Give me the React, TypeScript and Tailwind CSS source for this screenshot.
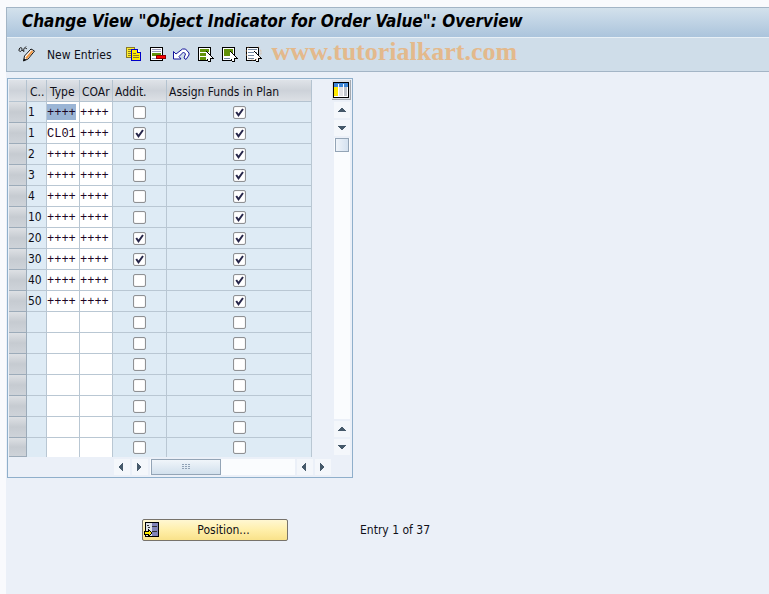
import React from "react";

const check = (
  <svg className="pointer-events-none absolute left-0 top-0 hidden h-[13px] w-[13px] peer-checked:block" viewBox="0 0 13 13" fill="none" stroke="#26264a" strokeWidth="2">
    <path d="M3.2 6 5.5 9.3 10 3" />
  </svg>
);

const rows = [
  { c: "1", type: "++++", area: "++++", addit: false, plan: true },
  { c: "1", type: "CL01", area: "++++", addit: true, plan: true },
  { c: "2", type: "++++", area: "++++", addit: false, plan: true },
  { c: "3", type: "++++", area: "++++", addit: false, plan: true },
  { c: "4", type: "++++", area: "++++", addit: false, plan: true },
  { c: "10", type: "++++", area: "++++", addit: false, plan: true },
  { c: "20", type: "++++", area: "++++", addit: true, plan: true },
  { c: "30", type: "++++", area: "++++", addit: true, plan: true },
  { c: "40", type: "++++", area: "++++", addit: false, plan: true },
  { c: "50", type: "++++", area: "++++", addit: false, plan: true },
  ...Array.from({ length: 7 }, () => ({ c: "", type: "", area: "", addit: false, plan: false })),
];

function Tick({ on, label }: { on: boolean; label: string }) {
  return (
    <label className="relative mx-auto block h-[13px] w-[13px]">
      <input
        type="checkbox"
        defaultChecked={on}
        aria-label={label}
        className="peer block h-[13px] w-[13px] appearance-none rounded-[2px] border border-[#8f9194] bg-white shadow-[inset_0_0_1px_#b0b0b0]"
      />
      {check}
    </label>
  );
}

function Arrow({ dir }: { dir: "up" | "down" | "left" | "right" }) {
  const shapes = {
    up: "M7 6h2v1h1v1h1v1h1v1H4V9h1V8h1V7h1z",
    down: "M4 6h8v1h-1v1h-1v1H9v1H7V9H6V8H5V7H4z",
    left: "M9 4v8H8v-1H7v-1H6V9H5V7h1V6h1V5h1V4z",
    right: "M5 4v8h1v-1h1v-1h1V9h1V7H8V6H7V5H6V4z",
  };
  return (
    <button aria-label={`Scroll ${dir}`} className="block h-4 w-4 shrink-0 bg-[#f4f7fb]">
      <svg viewBox="0 0 16 16" className="h-4 w-4" shapeRendering="crispEdges">
        <path d={shapes[dir]} fill="#46596a" />
      </svg>
    </button>
  );
}

// white mouse pointer shared by the selection icons
const pointer = (
  <>
    <path d="M9 5h1v1h1v1h1v1h1v1h1v1h1v1h1v1h1v1h-3v3h-3v-2h-1v1H9z" fill="#000" />
    <path d="M9 6h1v1h1v1h1v1h1v1h1v1h1v1h-2v3h-2v-2h-1v1H9z" fill="#fff" />
  </>
);

function ToolIcon({ name }: { name: string }) {
  return (
    <svg viewBox="0 0 17 16" className="h-4 w-[17px]" shapeRendering="crispEdges">
      {name === "Display/Change" && (
        <g shapeRendering="auto" fill="none">
          <path d="M1 4.500C1 1 4 1 4 3S2 6.500 1 4.500zM4 4l2 1.500M6 5.500C5 2 7 1 9 3M7 1.500l1-1" stroke="#111" />
          <path d="m5.500 15 1-5 6.500-7 3.500 2-6.500 8z" fill="#fff" stroke="#111" />
          <path d="m8 12.500 6.500-7.500" stroke="#f39a45" strokeWidth="2" />
          <path d="m5.500 15 3-1.500-2.500-1z" fill="#111" />
        </g>
      )}
      {name === "Copy As" && (
        <>
          <path d="M1.500 1.500h8v10h-8z" fill="#ffee2b" stroke="#8a7a28" />
          <path d="M3 3.500h3M3 5.500h3M3 7.500h3M3 9.500h3" stroke="#8a7a28" />
          <path d="M6.500 3.500h6l3 3v8h-9z" fill="#ffed00" stroke="#0000c8" />
          <path d="M12.500 3.500v3h3" fill="#fff" stroke="#0000c8" />
          <path d="M8 7.500h3M8 9.500h6M8 11.500h6" stroke="#8a7a28" />
        </>
      )}
      {name === "Delete" && (
        <>
          <path d="M1 1h13v14H1z" />
          <path d="M2 2h11v12H2z" fill="#fff" />
          <path d="M3 3.500h9M3 5.500h9M3 12.500h5" stroke="#9a9aba" />
          <path d="M3 7h9v3H3z" fill="#62920a" />
          <path d="M7.500 9.500h9v3h-9z" fill="#f00" stroke="#8c0000" />
        </>
      )}
      {name === "Undo" && (
        <path d="M.5 5.500v7.500H8l-2-2.500L10.500 6l2 2-1.500 4 2 1.500 3-4.500V7l-3.500-4h-3L3 8z" fill="#fff" stroke="#14149b" shapeRendering="auto" />
      )}
      {name === "Select All" && (
        <>
          <path d="M1 1h13v14H1z" />
          <path d="M2 2h11v12H2z" fill="#fff" />
          <path d="M3 3h9v3H3zM3 7h9v3H3zM3 11h9v3H3z" fill="#62920a" />
          {pointer}
        </>
      )}
      {name === "Select Block" && (
        <>
          <path d="M1 1h13v14H1z" />
          <path d="M2 2h11v12H2z" fill="#fff" />
          <path d="M3 3h9v7H3z" fill="#62920a" />
          <path d="M3 12.500h6" stroke="#7488a0" />
          {pointer}
        </>
      )}
      {name === "Deselect All" && (
        <>
          <path d="M1 1h13v14H1z" />
          <path d="M2 2h11v12H2z" fill="#fff" />
          <path d="M3 3.500h9M3 6.500h9M3 9.500h9M3 12.500h9" stroke="#7488a0" />
          {pointer}
          <circle cx="8.500" cy="6.500" r="7.500" fill="none" stroke="#e3a56c" strokeDasharray="2 2" opacity=".6" shapeRendering="auto" />
        </>
      )}
    </svg>
  );
}

export default function App() {
  const head = "h-[22px] border-b border-r border-[#b4c3d0] bg-linear-to-b from-[#dfe3e8] via-[#cdd2d9] to-[#dce0e5] p-0 pt-0.5 text-left font-normal";
  const cell = "h-[21px] border-r border-[#b9c7d3] p-0 group-last:h-[19px] group-not-last:border-b";
  const field = "block h-[18px] w-full bg-transparent pt-px outline-none font-['Liberation_Mono',monospace] text-xs text-[#1c0624]";

  return (
    <main className="min-h-screen bg-[#f9fafd] pl-1.5 pt-[7px] font-['DejaVu_Sans_Condensed','DejaVu_Sans',sans-serif] text-xs text-[#101018]">
      <div className="min-h-[calc(100vh-7px)] bg-[#ebf0f8]">
        <header className="border-y border-l border-[#a3b5c6]">
          <h1 className="flex h-[30px] items-center border-b border-[#e8f0f6] bg-linear-to-b from-[#d3e1ec] to-[#abc4dc] pb-0.5 pl-[15px] text-[17px] font-bold italic text-black">
            Change View "Object Indicator for Order Value": Overview
          </h1>
          <nav className="flex h-[33px] items-center bg-[#cfdde9] pl-[11px]">
            <button aria-label="Display/Change" className="pb-0.5"><ToolIcon name="Display/Change" /></button>
            <button className="ml-3 mr-[13px]">New Entries</button>
            <div className="flex gap-[7px] pb-0.5">
              {["Copy As", "Delete", "Undo", "Select All", "Select Block", "Deselect All"].map((name) => (
                <button key={name} aria-label={name}><ToolIcon name={name} /></button>
              ))}
            </div>
            <span className="ml-2.5 pb-1.5 font-['Liberation_Serif',serif] text-[26px] font-bold leading-7 text-[#e3b98c]">
              www.tutorialkart.com
            </span>
          </nav>
        </header>

        <section className="ml-px mt-1.5 flex w-fit flex-col border border-[#8fafcb] pb-0.5 pl-px pt-px">
          <div className="flex">
            <table className="w-[303px] table-fixed border-separate border-spacing-0">
              <colgroup>
                <col className="w-[18px]" />
                <col className="w-5" />
                <col className="w-[33px]" />
                <col className="w-[33px]" />
                <col className="w-[54px]" />
                <col className="w-[145px]" />
              </colgroup>
              <thead>
                <tr>
                  <th className={head} aria-label="Row" />
                  <th className={`${head} pl-[3px]`}>C..</th>
                  <th className={`${head} pl-[3px]`}>Type</th>
                  <th className={`${head} overflow-hidden pl-0.5`}>COAr</th>
                  <th className={`${head} pl-0.5`}>Addit.</th>
                  <th className={`${head} pl-0.5`}>Assign Funds in Plan</th>
                </tr>
              </thead>
              <tbody>
                {rows.map((row, i) => (
                  <tr key={i} className="group">
                    <td className={`${cell} border-b border-[#9cabb9]! bg-linear-to-b from-[#dde0e4] via-[#c6cbd1] to-[#ced3d9]`}>
                      <button aria-label={`Select row ${i + 1}`} className="block h-[18px] w-full" />
                    </td>
                    <td className={`${cell} bg-[#deebf5] pl-px`}>{row.c}</td>
                    <td className={`${cell} bg-white`}>
                      <input aria-label={`Type ${i + 1}`} defaultValue={row.type} className={i === 0 ? `${field} h-4! w-[29px]! bg-[#9bb5d5]!` : field} />
                    </td>
                    <td className={`${cell} bg-white`}>
                      <input aria-label={`COAr ${i + 1}`} defaultValue={row.area} className={field} />
                    </td>
                    <td className={`${cell} bg-[#deebf5]`}><Tick on={row.addit} label={`Addit. ${i + 1}`} /></td>
                    <td className={`${cell} bg-[#deebf5]`}><Tick on={row.plan} label={`Assign Funds in Plan ${i + 1}`} /></td>
                  </tr>
                ))}
              </tbody>
            </table>
            <div className="ml-5 mr-px flex w-[19px] flex-col items-center gap-0.5 pb-0.5">
              <button aria-label="Configuration" className="h-5 w-[19px] border-b border-r border-[#a4a9b0] bg-[#dde1e7] pl-px">
                <svg viewBox="0 0 16 16" className="h-4 w-4" shapeRendering="crispEdges">
                  <path d="M0 0h16v16H0z" />
                  <path d="M1 1h14v14H1z" fill="#fff" />
                  <path d="M1 1h14v4H1z" fill="#3d85d5" />
                  <path d="M1 5h4v9H1z" fill="#ffe900" />
                  <path d="M6 5h4v9H6z" fill="#e2e2e6" />
                  <path d="M11 5h3v9h-3z" fill="#bfc3ca" />
                  <path d="M5.500 2v12M10.500 2v12" stroke="#fff" />
                </svg>
              </button>
              <Arrow dir="up" />
              <Arrow dir="down" />
              <div className="w-4 flex-1 bg-[#fafcfe] pl-px">
                <div className="h-3.5 w-3.5 border border-[#93a4b6] bg-linear-to-r from-[#eff4fa] to-[#d5e2f0]" />
              </div>
              <Arrow dir="up" />
              <Arrow dir="down" />
            </div>
          </div>
          <div className="ml-[105px] mt-0.5 flex w-[217px] gap-0.5">
            <Arrow dir="left" />
            <Arrow dir="right" />
            <div className="flex h-4 flex-1 bg-[#fafcfe] pl-px">
              <div className="grid h-4 w-[70px] place-items-center border border-[#93a4b6] bg-linear-to-b from-[#f0f5fa] to-[#d2e0ed]">
                <svg viewBox="0 0 9 6" className="h-1.5 w-[9px]" shapeRendering="crispEdges">
                  <path d="M0 .5h2M3 .5h2M6 .5h2M0 2.500h2M3 2.500h2M6 2.500h2M0 4.500h2M3 4.500h2M6 4.500h2" stroke="#91a2b5" />
                </svg>
              </div>
            </div>
            <Arrow dir="left" />
            <Arrow dir="right" />
          </div>
        </section>

        <footer className="ml-[136px] mt-[41px] flex items-center gap-[72px]">
          <button className="flex h-[22px] w-[146px] items-center rounded-[2px] border border-[#77736b] bg-linear-to-b from-[#fff7d2] via-[#ffefaa] to-[#f9e28a] pl-px">
            <svg viewBox="0 0 16 16" className="h-4 w-4" shapeRendering="crispEdges">
              <path d="M1 0h14v15H1z" />
              <path d="M2 1h12v13H2z" fill="#dfe3e8" />
              <path d="M8 1h6v13H8z" fill="#8184b8" />
              <path d="M8 4.500h5M8 9.500h5M3 3.500h2M4 5.500h2" stroke="#333" />
              <path d="M0 9h4V7h1v1h1v1h1v1h1v2H7v1H6v1H5v1H4v-2H0z" />
              <path d="M1 10h4V9h1v1h1v2H6v1H5v-1H1z" fill="#ffed00" />
            </svg>
            <span className="flex-1 text-center">Position...</span>
          </button>
          <span>Entry 1 of 37</span>
        </footer>
      </div>
    </main>
  );
}
